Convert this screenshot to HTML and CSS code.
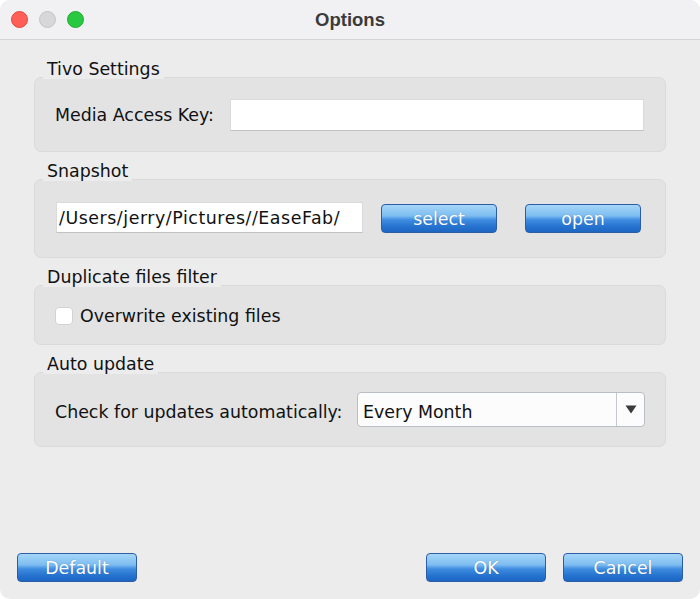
FILE: index.html
```html
<!DOCTYPE html>
<html>
<head>
<meta charset="utf-8">
<link rel="stylesheet" href="styles.css">
</head>
<body>
<div class="window">
  <div class="titlebar">
    <div class="lights">
      <span class="light red"></span>
      <span class="light gray"></span>
      <span class="light green"></span>
    </div>
    <div class="title">Options</div>
  </div>
  <div class="content">
    <div class="section">
      <div class="legend"><span>Tivo Settings</span></div>
      <div class="box row-box box-tivo">
        <span class="label">Media Access Key:</span>
        <div class="field field-key"></div>
      </div>
    </div>
    <div class="section">
      <div class="legend"><span>Snapshot</span></div>
      <div class="box box-snap">
        <div class="field field-path">/Users/jerry/Pictures//EaseFab/</div>
        <div class="btn btn-select">select</div>
        <div class="btn btn-open">open</div>
      </div>
    </div>
    <div class="section">
      <div class="legend"><span>Duplicate files filter</span></div>
      <div class="box box-dup">
        <span class="checkbox"></span>
        <span class="label">Overwrite existing files</span>
      </div>
    </div>
    <div class="section">
      <div class="legend"><span>Auto update</span></div>
      <div class="box row-box box-auto">
        <span class="label">Check for updates automatically:</span>
        <div class="select">
          <span class="select-text">Every Month</span>
          <span class="select-arrow"><svg width="12" height="9" viewBox="0 0 12 9"><path d="M0.5 0.5 L11.5 0.5 L6 8.5 Z" fill="#3a3a3a"/></svg></span>
        </div>
      </div>
    </div>
  </div>
  <div class="footer">
    <div class="btn">Default</div>
    <div class="spacer"></div>
    <div class="btn">OK</div>
    <div class="btn">Cancel</div>
  </div>
</div>
</body>
</html>
```

FILE: styles.css
```css
html, body {
  margin: 0;
  padding: 0;
  background: #ffffff;
}
body {
  font-family: "DejaVu Sans", sans-serif;
  font-size: 17.4px;
  color: #111111;
}
.window {
  width: 700px;
  height: 599px;
  border-radius: 10px;
  overflow: hidden;
  background: #ececec;
  display: flex;
  flex-direction: column;
}
.titlebar {
  height: 39px;
  flex: none;
  background: #f1f1f3;
  border-bottom: 1px solid #d3d3d5;
  display: flex;
  align-items: center;
  position: relative;
}
.lights {
  display: flex;
  gap: 11px;
  padding-left: 11px;
}
.light {
  width: 15px;
  height: 15px;
  border-radius: 50%;
  display: block;
}
.red { background: #fe5f57; border: 1px solid #e2463f; }
.gray { background: #d7d7d9; border: 1px solid #c4c4c6; }
.green { background: #28c840; border: 1px solid #1fae33; }
.title {
  position: absolute;
  left: 0;
  right: 0;
  top: 0;
  line-height: 39px;
  text-align: center;
  font-family: "Liberation Sans", Arial, sans-serif;
  font-weight: bold;
  font-size: 18.5px;
  color: #3b3b3b;
}
.content {
  flex: 1;
  padding: 21px 34px 0 34px;
  display: flex;
  flex-direction: column;
  gap: 11px;
}
.legend {
  height: 16px;
  line-height: 16px;
  padding-left: 9px;
  position: relative;
  z-index: 1;
}
.legend span {
  display: inline-block;
  background: #ececec;
  padding: 0 4px 2px 4px;
}
.box {
  background: #e3e3e3;
  border: 1px solid #dadada;
  border-radius: 7px;
  display: flex;
  align-items: center;
}
.row-box {
  justify-content: space-between;
}
.box-tivo {
  height: 73px;
  padding: 0 21px 0 20px;
}
.label {
  padding-top: 1px;
}
.field {
  background: #ffffff;
  border: 1px solid #dadada;
  border-bottom-color: #c2c2c2;
  box-sizing: border-box;
}
.field-key {
  width: 414px;
  height: 32px;
}
.box-snap {
  height: 77px;
  padding: 0 0 0 21px;
  align-items: flex-start;
}
.field-path {
  margin-top: 22px;
  width: 307px;
  height: 31px;
  line-height: 30px;
  padding-left: 2px;
  letter-spacing: 0.55px;
  white-space: nowrap;
  overflow: hidden;
}
.btn {
  width: 120px;
  height: 29px;
  box-sizing: border-box;
  border: 1px solid #2b5ea6;
  border-radius: 4px;
  background: linear-gradient(to bottom, #a6d6f8 0%, #7dbdf1 40%, #3f8ce0 55%, #2573cf 80%, #1d66c2 100%);
  color: #ffffff;
  text-align: center;
  line-height: 28px;
  font-size: 17.4px;
  text-shadow: 0 0 1px rgba(20, 60, 120, 0.4);
  flex: none;
}
.btn-select {
  width: 116px;
  margin-top: 24px;
  margin-left: 18px;
}
.btn-open {
  width: 116px;
  margin-top: 24px;
  margin-left: 28px;
}
.box-dup {
  height: 58px;
  padding: 0 20px;
  gap: 7px;
}
.checkbox {
  width: 18px;
  height: 18px;
  box-sizing: border-box;
  background: #ffffff;
  border: 1px solid #d2d2d2;
  border-radius: 4px;
  display: block;
  margin-top: 2px;
}
.box-auto {
  height: 73px;
  padding: 0 20px 0 20px;
}
.box-auto .label {
  padding-top: 5px;
}
.select {
  width: 288px;
  height: 35px;
  box-sizing: border-box;
  background: #fcfcfc;
  border: 1px solid #b9bdc4;
  border-radius: 4px;
  display: flex;
  align-items: stretch;
}
.select-text {
  flex: 1;
  padding-left: 5px;
  line-height: 39px;
  height: 33px;
  overflow: hidden;
}
.select-arrow {
  width: 27px;
  border-left: 1px solid #c4c7cc;
  display: flex;
  align-items: center;
  justify-content: center;
}
.footer {
  flex: none;
  display: flex;
  gap: 17px;
  padding: 0 17px 17px 17px;
}
.spacer {
  flex: 1;
}
```
